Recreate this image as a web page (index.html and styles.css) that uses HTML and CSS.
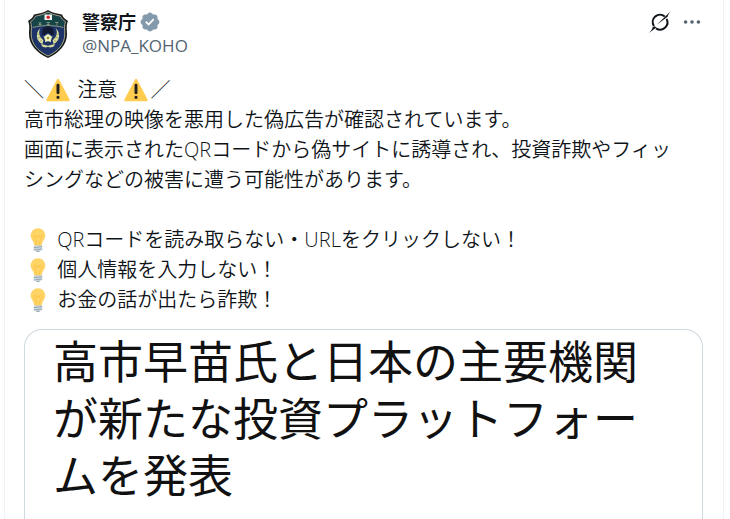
FILE: index.html
```
<!DOCTYPE html>
<html lang="ja">
<head>
    <meta charset="UTF-8">
    <meta name="viewport" content="width=device-width, initial-scale=1.0">
    <title>警察庁 @NPA_KOHO</title>
    <link rel="stylesheet" href="styles.css">
</head>
<body>
    <!-- shared emoji -->
    <svg class="sprite" aria-hidden="true">
        <symbol id="warning" viewBox="0 0 36 36">
            <path fill="#ffcc4d" d="M2.65 35C.81 35-.03 33.66.85 32.03L16.46 2.22c.85-1.62 2.24-1.62 3.09 0l15.59 29.81c.85 1.63.04 2.97-1.8 2.97H2.65z"/>
            <path fill="#231f20" d="M15.58 28.95a2.42 2.42 0 1 1 4.84 0 2.42 2.42 0 0 1-4.84 0zm.19-18.29c0-1.3.96-2.1 2.23-2.1 1.24 0 2.23.83 2.23 2.1v11.6c0 1.27-.99 2.1-2.23 2.1-1.27 0-2.23-.8-2.23-2.1v-11.6z"/>
        </symbol>
        <symbol id="bulb" viewBox="0 0 36 36">
            <path fill="#ffd466" d="M29 11.06c0 6.36-5 8.57-5 14.72 0 1.35-1.22 2.22-2.31 2.22h-7.38C13.23 28 12 27.13 12 25.78c0-6.15-5-8.36-5-14.72C7 5.1 12.05.29 18 .29S29 5.1 29 11.06z"/>
            <path fill="none" stroke="#ffc23d" stroke-width="1.2" d="M16 27c0-7-2-10-4-14 0-3 4-3 4 0v1c1-1.500 3-1.500 4 0v-1c0-3 4-3 4 0-2 4-4 7-4 14"/>
            <path fill="#ccd6dd" d="M12 26h12v6a2 2 0 0 1-2 2h-8a2 2 0 0 1-2-2z"/>
            <path fill="#99aab5" d="M15 34h6c0 1-1.300 2-3 2s-3-1-3-2z"/>
            <path stroke="#99aab5" stroke-width="1.500" stroke-linecap="round" d="M12 29.500l12-1.500M12 33l12-1.500"/>
        </symbol>
    </svg>

    <main class="column">
        <article class="post">
            <header class="post-header">
                <a class="avatar" href="#" aria-label="警察庁">
                    <svg viewBox="0 0 48 48" aria-hidden="true">
                        <path fill="#17191c" d="M24 0c4 2.500 9 3.800 14 4.500 1 3 3 4.500 6 6.500-2 4-1 9-1 13 0 11-8 19-19 24C13 43 5 35 5 24c0-4 1-9-1-13 3-2 5-3.500 6-6.500C15 3.800 20 2.500 24 0z"/>
                        <path fill="#1e3468" stroke="#b7bc91" stroke-width=".9" d="M24 2c4 2.300 8 3.500 12.500 4.200 1 2.500 2.700 4 5 5.500-1.500 4-.7 8-.7 12.300C40.800 34 34 41.300 24 46 14 41.300 7.200 34 7.200 24c0-4.300.8-8.300-.7-12.300 2.300-1.500 4-3 5-5.500C16 5.500 20 4.300 24 2z"/>
                        <path fill="#164447" d="M24 3c4 2 8 3.300 12 4 1 2.300 2.400 3.700 4.300 5-.8 2-1 4-.9 5.500C30 15 18 15 8.600 17.500c.1-1.500-.1-3.500-.9-5.500C9.600 10.700 11 9.300 12 7c4-.7 8-2 12-4z"/>
                        <path fill="none" stroke="#b7bc91" stroke-width=".7" d="M8.600 17.500C18 15 30 15 39.400 17.500"/>
                        <path fill="#f5f5f0" d="M20.500 4.500h7.500v5.500h-7.500z"/>
                        <circle cx="24.200" cy="7.200" r="1.700" fill="#d8232f"/>
                        <path stroke="#8a9c8c" stroke-width=".8" d="M14.500 13h3m-3 1.500h3m-1.500-2.500v4M22.500 12.500h3.500m-3.500 2h3.500m-1.800-2.500v4M31 12.500h3.500M33 12v3.500"/>
                        <path fill="#101a30" d="M19 18l5-2 5 2 1 7H18z"/>
                        <path fill="#d9dc9c" d="M16.500 18c-2.500 4-1.500 9 3 12l-1 4c-6-2-8-11-2-16zM31.500 18c2.500 4 1.500 9-3 12l1 4c6-2 8-11 2-16z"/>
                        <path fill="none" stroke="#7d8a66" stroke-width=".6" d="M13 24l3 .5M14 28l3-1M16 31.500l2.500-2M35 24l-3 .5M34 28l-3-1M32 31.500l-2.500-2"/>
                        <circle cx="24" cy="28" r="5" fill="#15316b"/>
                        <circle cx="24" cy="28" r="3.600" fill="#d9dc9c"/>
                        <path fill="#f3f3bd" d="M24 23.500l1.500 2.800 3.200.4-2.300 2.300.7 3.200-3.100-1.500-3.100 1.500.7-3.200-2.300-2.300 3.200-.4z"/>
                        <circle cx="24" cy="28" r="1.200" fill="#8b8a3e"/>
                        <path fill="#d9dc9c" d="M17 34l7 1.800 7-1.800-1.500 2.800-3.500.7-2-.8-2 .8-3.500-.7z"/>
                    </svg>
                </a>
                <div class="author">
                    <div class="author-name">
                        <a href="#">警察庁</a>
                        <svg class="badge" viewBox="0 0 22 22" role="img" aria-label="認証済み">
                            <path fill="#829aab" d="M20.396 11c-.018-.646-.215-1.275-.57-1.816-.354-.54-.852-.972-1.438-1.246.223-.607.270-1.264.140-1.897-.131-.634-.437-1.218-.882-1.687-.470-.445-1.053-.750-1.687-.882-.633-.130-1.290-.083-1.897.140-.273-.587-.704-1.086-1.245-1.440S11.647 1.620 11 1.604c-.646.017-1.273.213-1.813.568s-.969.854-1.240 1.440c-.608-.223-1.267-.272-1.902-.140-.635.130-1.220.436-1.690.882-.445.470-.749 1.055-.878 1.688-.130.633-.080 1.290.144 1.896-.587.274-1.087.705-1.443 1.245-.356.540-.555 1.170-.574 1.817.020.647.218 1.276.574 1.817.356.540.856.972 1.443 1.245-.224.606-.274 1.263-.144 1.896.130.634.433 1.218.877 1.688.470.443 1.054.747 1.687.878.633.132 1.290.084 1.897-.136.274.586.705 1.084 1.246 1.439.540.354 1.170.551 1.816.569.647-.016 1.276-.213 1.817-.567s.972-.854 1.245-1.440c.604.239 1.266.296 1.903.164.636-.132 1.220-.447 1.680-.907.460-.460.776-1.044.908-1.681s.075-1.299-.165-1.903c.586-.274 1.084-.705 1.439-1.246.354-.540.551-1.170.569-1.816z"/>
                            <path fill="#fff" d="M9.662 14.850l-3.429-3.428 1.293-1.302 2.072 2.072 4.400-4.794 1.347 1.246z"/>
                        </svg>
                    </div>
                    <a class="handle" href="#">@NPA_KOHO</a>
                </div>
                <div class="actions">
                    <button type="button" aria-label="Grok">
                        <svg viewBox="0 0 24 24" fill="none" stroke="#0f1419" stroke-width="2.200">
                            <path d="M17.200 5.900A8 8 0 0 0 5.300 16.300"/>
                            <path d="M19.200 8.600A8 8 0 0 1 7.600 18.900"/>
                            <path fill="#0f1419" stroke="none" d="M24 0c-2 2.400-3.200 4-3.700 6.200l-2.200 1.700L8.500 15 18 5.600zM0 24c2-2 3.500-4 4.100-6.500l2.200-.8 1.700 1.400z"/>
                        </svg>
                    </button>
                    <button type="button" aria-label="もっと見る">
                        <svg viewBox="0 0 24 24" fill="#536471">
                            <circle cx="5" cy="12" r="2"/>
                            <circle cx="12" cy="12" r="2"/>
                            <circle cx="19" cy="12" r="2"/>
                        </svg>
                    </button>
                </div>
            </header>

            <p class="post-text">
                ＼<svg class="emoji" role="img" aria-label="警告"><use href="#warning"/></svg> 注意 <svg class="emoji" role="img" aria-label="警告"><use href="#warning"/></svg>／<br>
                高市総理の映像を悪用した偽広告が確認されています。<br>
                画面に表示されたQRコードから偽サイトに誘導され、投資詐欺やフィッ<br>
                シングなどの被害に遭う可能性があります。<br>
                <br>
                <svg class="emoji" role="img" aria-label="電球"><use href="#bulb"/></svg> QRコードを読み取らない・URLをクリックしない！<br>
                <svg class="emoji" role="img" aria-label="電球"><use href="#bulb"/></svg> 個人情報を入力しない！<br>
                <svg class="emoji" role="img" aria-label="電球"><use href="#bulb"/></svg> お金の話が出たら詐欺！
            </p>

            <section class="media">
                <h2>高市早苗氏と日本の主要機関<br>が新たな投資プラットフォー<br>ムを発表</h2>
            </section>
        </article>
    </main>
</body>
</html>
```
FILE: styles.css
```
:root {
    --text: #0f1419;
    --muted: #536471;
    --line: #eff3f4;
    --card-line: #cfd9de;
}

* {
    box-sizing: border-box;
    margin: 0;
    padding: 0;
}

body {
    font-family: "Open Sans", "Noto Sans CJK JP", sans-serif;
    color: var(--text);
    background: #fff;
}

a {
    color: inherit;
    text-decoration: none;
}

.sprite {
    display: none;
}

.column {
    display: flex;
    min-height: 100vh;
    margin: 0 6px 0 4px;
    border: solid var(--line);
    border-width: 0 1px;
}

.post {
    flex: 1;
    display: flex;
    flex-direction: column;
    padding: 10px 20px 0 19px;
}

.post-header {
    display: flex;
    gap: 10px;
    height: 48px;
}

.avatar,
.avatar svg {
    display: block;
    width: 48px;
    height: 48px;
}

.author {
    flex: 1;
    font-size: 18px;
    line-height: 24px;
}

.author-name {
    display: flex;
    align-items: center;
    gap: 3px;
    font-weight: 700;
}

.badge {
    width: 22px;
    height: 22px;
}

.handle {
    display: block;
    font-size: 17px;
    color: var(--muted);
}

.actions {
    display: flex;
    align-items: flex-start;
    gap: 10px;
}

.actions button {
    height: 24px;
    border: 0;
    background: none;
    cursor: pointer;
}

.actions svg {
    display: block;
    width: 22px;
    height: 24px;
}

.post-text {
    margin-top: 17px;
    font-size: 20px;
    font-weight: 350;
    line-height: 30px;
}

.emoji {
    width: 24px;
    height: 24px;
    margin: 0 2px;
    vertical-align: -5px;
}

.media {
    flex: 1;
    margin-top: 14px;
    padding: 3px 28px 0;
    border: 1px solid var(--card-line);
    border-bottom: 0;
    border-radius: 18px 18px 0 0;
}

.media h2 {
    font-size: 45px;
    font-weight: 400;
    line-height: 57px;
    color: #111;
    white-space: nowrap;
}
```
